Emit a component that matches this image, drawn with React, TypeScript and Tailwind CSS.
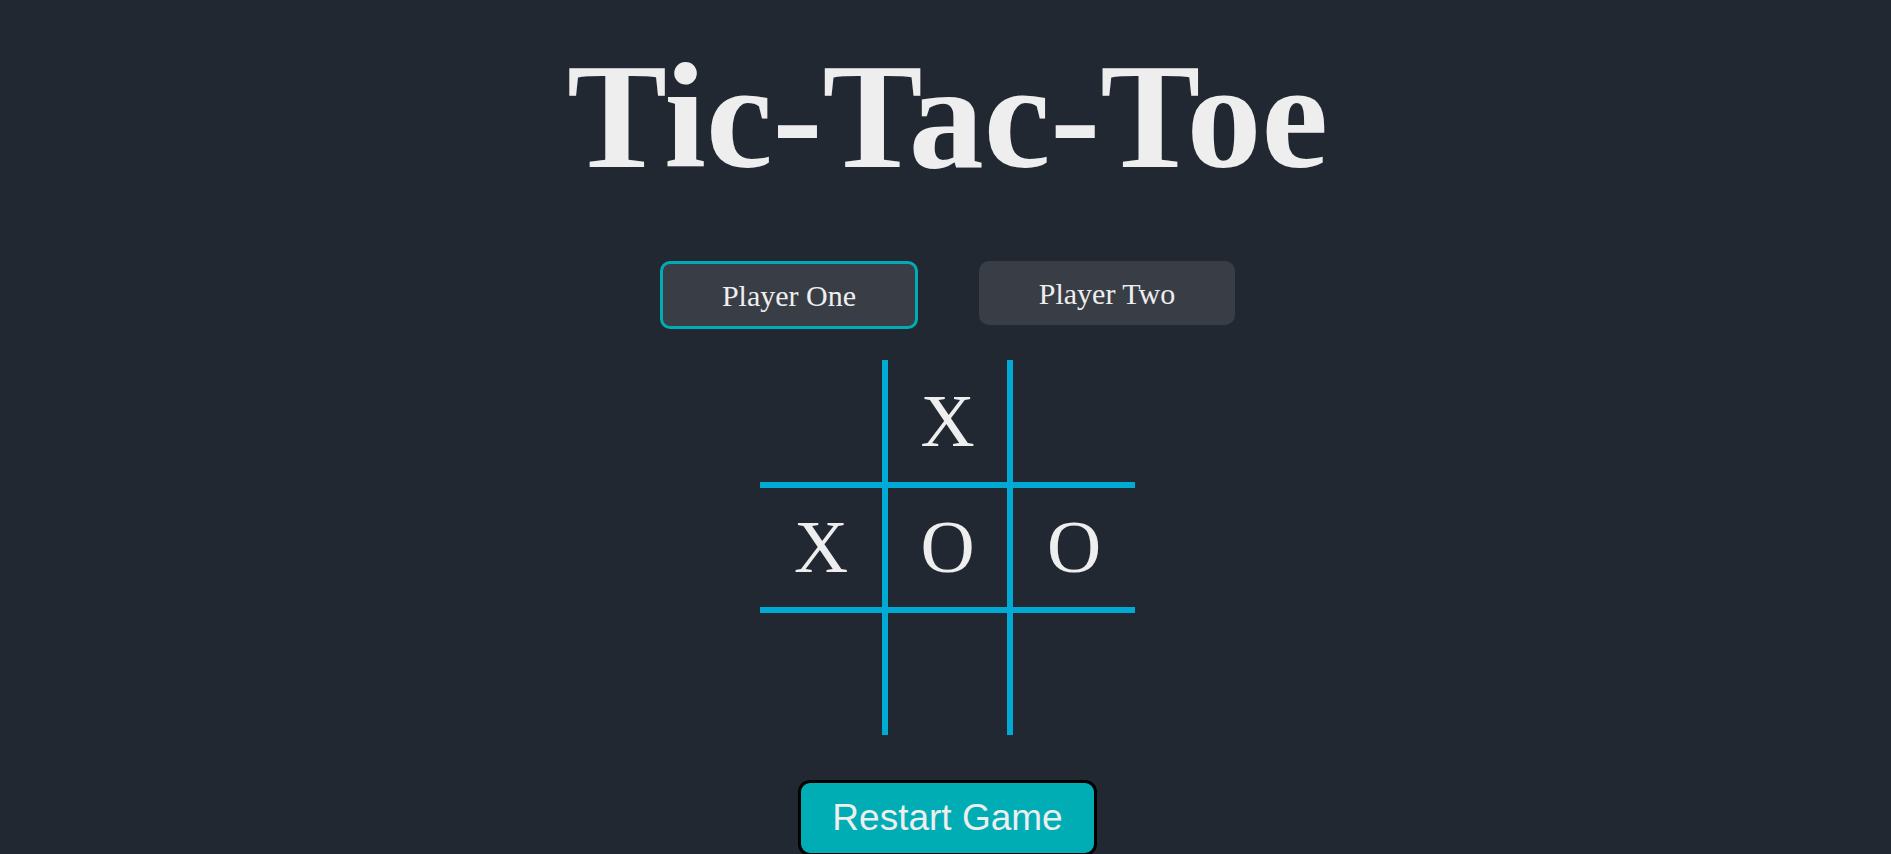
const board: string[] = ["", "X", "", "X", "O", "O", "", "", ""];

const cellBorders = [
  "border-r-[3px] border-b-[3px]",
  "border-x-[3px] border-b-[3px]",
  "border-l-[3px] border-b-[3px]",
  "border-r-[3px] border-y-[3px]",
  "border-x-[3px] border-y-[3px]",
  "border-l-[3px] border-y-[3px]",
  "border-r-[3px] border-t-[3px]",
  "border-x-[3px] border-t-[3px]",
  "border-l-[3px] border-t-[3px]",
];

const App = () => {
  return (
    <div className="min-h-screen bg-[#222831] pl-1 flex flex-col items-center text-[#eeeeee] font-['Liberation_Serif',serif]">
      <h1 className="mt-[30px] text-[150px] font-bold leading-[normal]">
        Tic-Tac-Toe
      </h1>

      <div className="mt-[59px] flex flex-row items-start gap-[61px]">
        <button className="w-[258px] h-[68px] rounded-[10px] border-[3px] border-[#00adb5] bg-[#393e46] text-[30px] flex items-center justify-center">
          Player One
        </button>
        <button className="w-[256px] h-[64px] rounded-[10px] bg-[#393e46] text-[30px] flex items-center justify-center">
          Player Two
        </button>
      </div>

      <div className="mt-[31px] grid grid-cols-3">
        {board.map((value, i) => (
          <div
            key={i}
            className={`w-[125px] h-[125px] border-[#00aad4] flex items-center justify-center text-[75px] ${cellBorders[i]}`}
          >
            {value}
          </div>
        ))}
      </div>

      <button className="mt-[45px] mb-10 px-[31px] py-[14px] rounded-[12px] border-[3px] border-black bg-[#00adb5] text-[37px] leading-[normal] font-['Liberation_Sans',sans-serif]">
        Restart Game
      </button>
    </div>
  );
};

export default App;
